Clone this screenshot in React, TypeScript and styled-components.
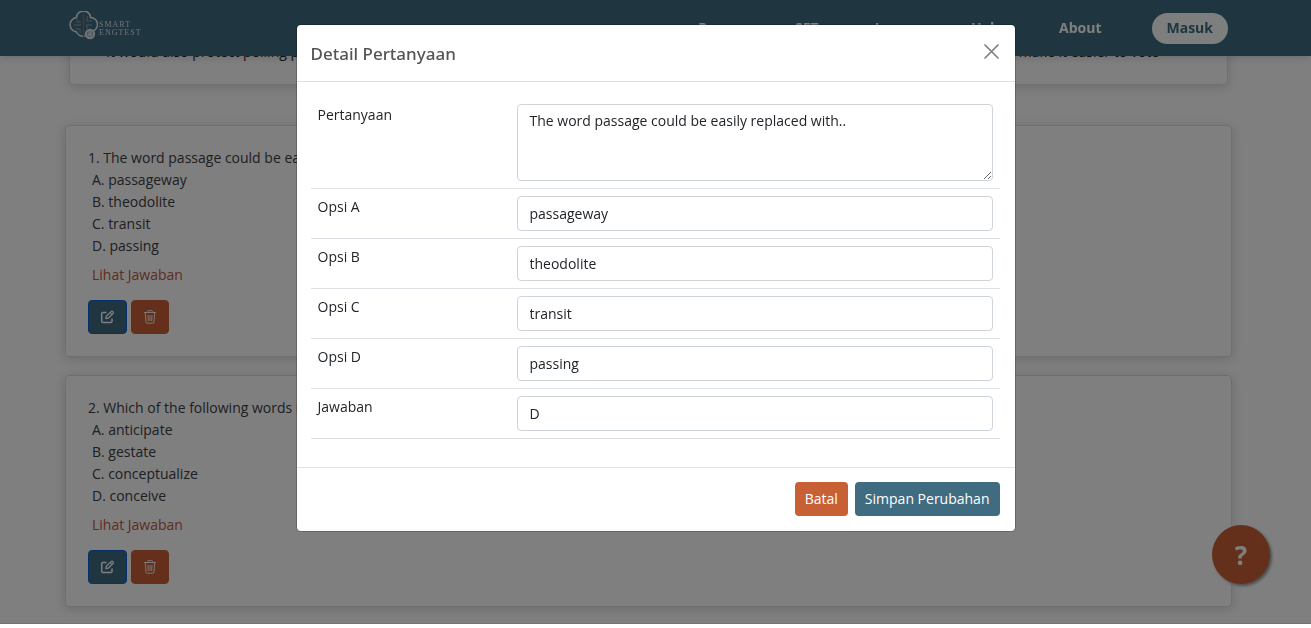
import React from "react";
import styled, { createGlobalStyle } from "styled-components";

const ink = "#212529";
const teal = "#3f6c80";
const orange = "#c86036";

const GlobalStyle = createGlobalStyle`
  *, *::before, *::after { box-sizing: border-box; }
  html, body { margin: 0; height: 100%; overflow: hidden; background: #fff; }
  body, button, input, textarea {
    font-family: "Open Sans", "Noto Sans", sans-serif;
    font-size: 14px;
    line-height: 22px;
    color: ${ink};
  }
`;

const Navbar = styled.header`
  position: fixed;
  top: 0;
  left: 0;
  right: 0;
  z-index: 1;
  height: 56px;
  padding: 0 83px 0 69px;
  display: flex;
  align-items: center;
  justify-content: space-between;
  background: ${teal};
  box-shadow: 0 2px 8px rgba(0, 0, 0, 0.15);
`;

const Brand = styled.a`
  display: flex;
  align-items: center;
  gap: 1px;
  padding-bottom: 6px;
  color: #fff;
  text-decoration: none;
`;

const BrandName = styled.span`
  margin-top: 8px;
  font-family: "Liberation Serif", serif;
  font-size: 8px;
  line-height: 8px;
  letter-spacing: 1px;
  opacity: 0.8;
`;

const Nav = styled.nav`
  display: flex;
  align-items: center;
  gap: 50px;
`;

const NavLinks = styled.div`
  display: flex;
  gap: 56px;
`;

const NavLink = styled.a`
  font-weight: 700;
  color: #fff;
  text-decoration: none;
`;

const LoginButton = styled.button`
  height: 31px;
  padding: 0 15px;
  border: 0;
  border-radius: 16px;
  background: #f8fffa;
  color: ${teal};
  font-weight: 700;
`;

const Page = styled.main`
  padding: 40px 79px 0 65px;
  display: flex;
  flex-direction: column;
  gap: 18px;
`;

const Card = styled.section`
  padding: 21px 22px 22px;
  border: 1px solid #dfdfdf;
  border-radius: 4px;
  background: #fff;
  color: #3c4044;
  box-shadow: 0 2px 12px rgba(0, 0, 0, 0.17);
`;

const Passage = styled(Card)`
  margin: 0 4px 22px;
  padding: 0 68px 21px 36px;
  display: flex;
  justify-content: space-between;
  color: ${ink};
`;

const Question = styled.p`
  margin: 0;
`;

const Options = styled.ol`
  margin: 0;
  padding: 0 0 0 4px;
  list-style: none;
`;

const AnswerLink = styled.a`
  display: block;
  width: max-content;
  margin: 7px 0 14px 4px;
  color: #c0583f;
  text-decoration: none;
`;

const Actions = styled.div`
  display: flex;
  gap: 4px;
`;

const IconButton = styled.button<{ $tone: string; $edge: string }>`
  height: 34px;
  padding: 0 11px;
  display: grid;
  place-items: center;
  border: 1px solid ${(p) => p.$edge};
  border-radius: 4px;
  background: ${(p) => p.$tone};
  color: #fff;
`;

const HelpButton = styled.button`
  position: fixed;
  right: 41px;
  bottom: 44px;
  width: 58px;
  height: 59px;
  border: 0;
  border-radius: 50%;
  background: ${orange};
  color: #fff;
  font-size: 26px;
  font-weight: 700;
  box-shadow: 2px 2px 3px #999;
`;

const Backdrop = styled.div`
  position: fixed;
  inset: 0 0 4px;
  z-index: 2;
  padding: 25px 10px;
  border-bottom: 1px solid rgba(60, 40, 50, 0.15);
  background: rgba(0, 0, 0, 0.5);
`;

const Dialog = styled.form`
  max-width: 718px;
  margin: 0 auto;
  border-radius: 4px;
  background: #fff;
  box-shadow: 0 0 0 1px rgba(0, 0, 0, 0.2);
`;

const DialogHeader = styled.header`
  height: 57px;
  padding: 0 14px;
  display: flex;
  align-items: center;
  justify-content: space-between;
  border-bottom: 1px solid #dee2e6;
`;

const DialogTitle = styled.h1`
  margin: 0;
  font-family: "Noto Sans", "Open Sans", sans-serif;
  font-size: 17px;
  line-height: 27px;
  font-weight: 500;
  color: #555;
`;

const CloseButton = styled.button`
  width: 18px;
  height: 20px;
  padding: 0 0 3px;
  border: 0;
  background: none;
  color: #808080;
  display: grid;
  place-items: center;
`;

const DialogBody = styled.div`
  padding: 15px 15px 28px 14px;
`;

const FieldTable = styled.table`
  width: 100%;
  border-spacing: 0;
  table-layout: fixed;
`;

const LabelCell = styled.th`
  width: 199px;
  padding: 7px;
  border-bottom: 1px solid #dee2e6;
  text-align: left;
  vertical-align: top;
  font-weight: 400;
`;

const FieldCell = styled.td`
  padding: 7px;
  border-bottom: 1px solid #dee2e6;
`;

const TextInput = styled.input`
  display: block;
  width: 100%;
  height: 35px;
  padding: 6px 12px;
  border: 1px solid #ced4da;
  border-radius: 4px;
`;

const TextArea = styled.textarea`
  display: block;
  width: 100%;
  height: 77px;
  padding: 5px 12px;
  border: 1px solid #ced4da;
  border-radius: 4px;
  resize: vertical;
`;

const DialogFooter = styled.footer`
  padding: 14px 15px 15px;
  display: flex;
  justify-content: flex-end;
  gap: 7px;
  border-top: 1px solid #dee2e6;
`;

const Button = styled.button<{ $tone: string }>`
  height: 34px;
  padding: 0 10px;
  border: 0;
  border-radius: 4px;
  background: ${(p) => p.$tone};
  color: #fff;
`;

const LogoMark = () => (
  <svg width="29" height="29" viewBox="0 0 29 29" fill="none">
    <path d="M7.500 6.500A7 6.500 0 0 1 21.500 6.500A7 7 0 0 1 21.500 20.500A7.500 7 0 0 1 7.500 21A7.300 7.300 0 0 1 7.500 6.500Z" stroke="#e8eaec" strokeWidth="1.500" />
    <path d="M8 8V11H12M5 14H12M6 18H11V22M18 5V10H23M17 14H23M18 14V18" stroke="#86a2af" strokeWidth="1" />
    <path d="M14.500 1V27" stroke={orange} strokeWidth="1.300" />
    <circle cx="21" cy="23" r="5.200" fill="#dfe5ea" />
    <path d="M18.500 21H23.500V24.500Q21 26.500 18.500 24.500ZM20 22.500V23.500M22 22.500V23.500" stroke="#8fa1b3" strokeWidth="0.800" />
  </svg>
);

const EditIcon = () => (
  <svg width="15" height="14" viewBox="0 0 15 14" fill="none" stroke="currentColor" strokeLinejoin="round">
    <path d="M6.500 2.500H3Q1.700 2.500 1.700 3.800V11.200Q1.700 12.500 3 12.500H10.700Q12 12.500 12 11.200V8.500" strokeWidth="1.500" />
    <path d="M5.800 8.700L6.300 6.300L11.100 1.600Q12 0.800 12.900 1.700Q13.700 2.600 13 3.500L8.200 8.200ZM10.200 2.600L12 4.400" strokeWidth="1.200" />
  </svg>
);

const TrashIcon = () => (
  <svg width="14" height="14" viewBox="0 0 14 14" fill="none" stroke="currentColor" strokeWidth="0.900">
    <path d="M1 2.500H13M4.500 2.500V1.500Q4.500 0.700 5.300 0.700H8.700Q9.500 0.700 9.500 1.500V2.500M2.300 2.500L3 12Q3.100 13.200 4.200 13.200H9.800Q10.900 13.200 11 12L11.700 2.500M5 5L5.300 11M7 5V11M9 5L8.700 11" />
  </svg>
);

const CloseIcon = () => (
  <svg width="15" height="15" viewBox="0 0 15 15" fill="none" stroke="currentColor" strokeWidth="1.700" strokeLinecap="round">
    <path d="M1 1L14 14M14 1L1 14" />
  </svg>
);

const links = ["Paper", "SET", "Learn", "Help", "About"];

const questions = [
  {
    text: "1. The word passage could be easily replaced with..",
    options: ["A. passageway", "B. theodolite", "C. transit", "D. passing"],
  },
  {
    text: "2. Which of the following words is closest in meaning?",
    options: ["A. anticipate", "B. gestate", "C. conceptualize", "D. conceive"],
  },
];

const fields = [
  ["Opsi A", "passageway"],
  ["Opsi B", "theodolite"],
  ["Opsi C", "transit"],
  ["Opsi D", "passing"],
  ["Jawaban", "D"],
];

export default function App() {
  return (
    <>
      <GlobalStyle />
      <Navbar>
        <Brand href="#" aria-label="Smart Engtest">
          <LogoMark />
          <BrandName>SMART<br />ENGTEST</BrandName>
        </Brand>
        <Nav>
          <NavLinks>
            {links.map((name) => <NavLink key={name} href="#">{name}</NavLink>)}
          </NavLinks>
          <LoginButton type="button">Masuk</LoginButton>
        </Nav>
      </Navbar>
      <Page>
        <Passage>
          <span>It would also protect polling places</span>
          <span>and make it easier to vote</span>
        </Passage>
        {questions.map((q) => (
          <Card key={q.text}>
            <Question>{q.text}</Question>
            <Options>
              {q.options.map((o) => <li key={o}>{o}</li>)}
            </Options>
            <AnswerLink href="#">Lihat Jawaban</AnswerLink>
            <Actions>
              <IconButton type="button" aria-label="Edit" $tone={teal} $edge="#0d5fd8"><EditIcon /></IconButton>
              <IconButton type="button" aria-label="Hapus" $tone={orange} $edge={orange}><TrashIcon /></IconButton>
            </Actions>
          </Card>
        ))}
      </Page>
      <HelpButton type="button">?</HelpButton>
      <Backdrop>
        <Dialog role="dialog" aria-labelledby="dialog-title">
          <DialogHeader>
            <DialogTitle id="dialog-title">Detail Pertanyaan</DialogTitle>
            <CloseButton type="button" aria-label="Tutup"><CloseIcon /></CloseButton>
          </DialogHeader>
          <DialogBody>
            <FieldTable>
              <tbody>
                <tr>
                  <LabelCell scope="row"><label htmlFor="question">Pertanyaan</label></LabelCell>
                  <FieldCell><TextArea id="question" defaultValue="The word passage could be easily replaced with.." /></FieldCell>
                </tr>
                {fields.map(([name, value]) => (
                  <tr key={name}>
                    <LabelCell scope="row"><label htmlFor={name}>{name}</label></LabelCell>
                    <FieldCell><TextInput id={name} defaultValue={value} /></FieldCell>
                  </tr>
                ))}
              </tbody>
            </FieldTable>
          </DialogBody>
          <DialogFooter>
            <Button type="button" $tone={orange}>Batal</Button>
            <Button type="submit" $tone={teal}>Simpan Perubahan</Button>
          </DialogFooter>
        </Dialog>
      </Backdrop>
    </>
  );
}
